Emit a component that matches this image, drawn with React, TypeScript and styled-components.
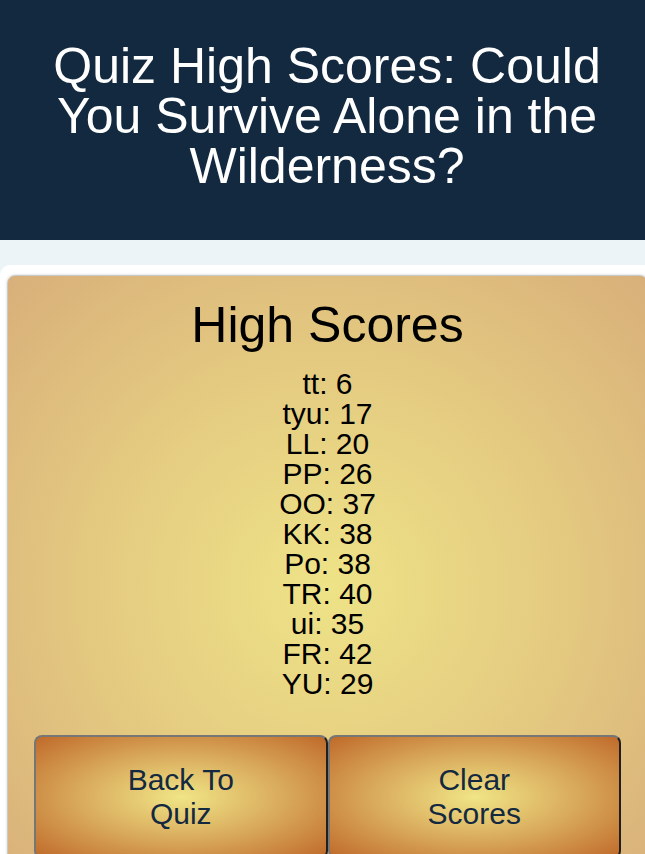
import React from "react";
import styled, { createGlobalStyle } from "styled-components";

const GlobalStyle = createGlobalStyle`
  html, body {
    margin: 0;
    padding: 0;
  }
  body {
    background: #ecf4f8;
    min-width: 654px;
    font-family: "Liberation Sans", Arial, sans-serif;
  }
`;

const Header = styled.header`
  background: #132940;
  color: #ffffff;
  text-align: center;
  padding: 41px 20px 49px;
`;

const Title = styled.h1`
  margin: 0;
  font-size: 50px;
  line-height: 50px;
  font-weight: 400;
`;

const Main = styled.main`
  padding-top: 25px;
`;

const Sheet = styled.section`
  background: #ffffff;
  border-radius: 10px 10px 0 0;
  padding: 10px 6px 0 7px;
`;

const Card = styled.div`
  border: 1px solid #c9c9c9;
  box-shadow: 0 0 3px rgba(0, 0, 0, 0.18);
  border-radius: 8px;
  background: radial-gradient(ellipse at center, #eee387 0%, #e3c880 55%, #d8af7a 100%);
  padding: 21px 26px 40px;
  display: flex;
  flex-direction: column;
  align-items: center;
`;

const Heading = styled.h2`
  margin: 0;
  font-size: 50px;
  font-weight: 400;
  color: #000;
  line-height: 57px;
`;

const ScoreList = styled.ol`
  list-style: none;
  margin: 15px 0 0;
  padding: 0;
  text-align: center;
`;

const ScoreItem = styled.li`
  font-size: 30px;
  line-height: 30px;
  color: #000;
`;

const ButtonRow = styled.div`
  display: flex;
  width: 100%;
  margin-top: 36px;
`;

const ActionButton = styled.button`
  flex: 1;
  border-style: solid;
  border-width: 2px;
  border-color: #767676 #1f1f1f #1f1f1f #767676;
  border-radius: 8px;
  background: radial-gradient(ellipse at center, #f0e586 0%, #d9aa5c 50%, #c06a2a 100%);
  color: #132940;
  font-family: "Liberation Sans", Arial, sans-serif;
  font-size: 30px;
  line-height: 34px;
  padding: 26px 62px 26px;
  cursor: pointer;
`;

const scores: { name: string; score: number }[] = [
  { name: "tt", score: 6 },
  { name: "tyu", score: 17 },
  { name: "LL", score: 20 },
  { name: "PP", score: 26 },
  { name: "OO", score: 37 },
  { name: "KK", score: 38 },
  { name: "Po", score: 38 },
  { name: "TR", score: 40 },
  { name: "ui", score: 35 },
  { name: "FR", score: 42 },
  { name: "YU", score: 29 },
];

export default function App() {
  return (
    <>
      <GlobalStyle />
      <Header>
        <Title>Quiz High Scores: Could You Survive Alone in the Wilderness?</Title>
      </Header>
      <Main>
        <Sheet>
          <Card>
            <Heading>High Scores</Heading>
            <ScoreList>
              {scores.map((s, i) => (
                <ScoreItem key={i}>
                  {s.name}: {s.score}
                </ScoreItem>
              ))}
            </ScoreList>
            <ButtonRow>
              <ActionButton>Back To Quiz</ActionButton>
              <ActionButton>Clear Scores</ActionButton>
            </ButtonRow>
          </Card>
        </Sheet>
      </Main>
    </>
  );
}
